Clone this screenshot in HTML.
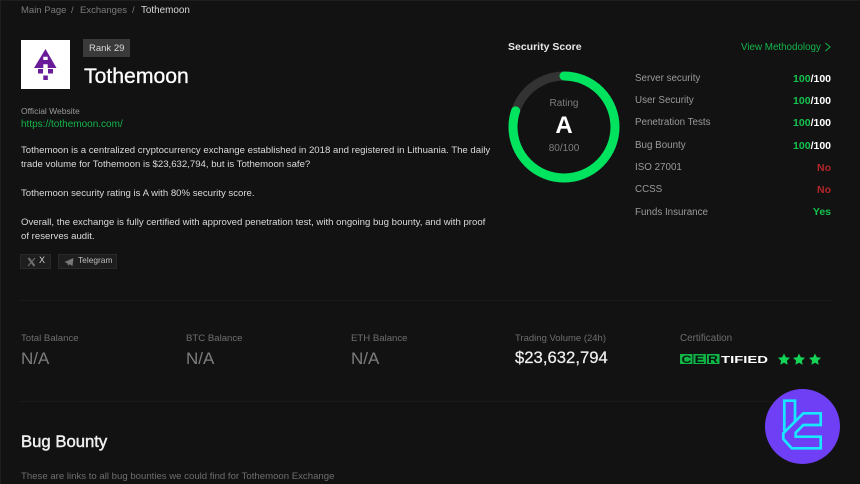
<!DOCTYPE html>
<html>
<head>
<meta charset="utf-8">
<style>
html,body{margin:0;padding:0;background:#121212;}
body{width:860px;height:484px;position:relative;overflow:hidden;font-family:"Liberation Sans",sans-serif;color:#fff;}
.t{position:absolute;white-space:nowrap;line-height:1;}
.lab{font-size:9.8px;color:#9a9a9a;left:635px}
.val{font-size:10.5px;font-weight:bold;right:29px;color:#fff}
.gr{color:#14c24f}
.hl{position:absolute;left:20px;width:812px;height:1px;background:#1a1a1a}
.sl{font-size:9.6px;color:#6e6e6e}
.sv{font-size:17px;color:#7d7d7d}
.p{font-size:9.6px;color:#dadada;left:21px}
.btn{position:absolute;top:254px;height:15px;background:#1e1e1e;border:1px solid #292929;box-sizing:border-box}
</style>
</head>
<body>
<div style="position:absolute;left:0;top:0;width:860px;height:1px;background:#1e1e1e"></div>
<div style="position:absolute;left:0;top:0;width:1px;height:484px;background:#1e1e1e"></div>

<div class="t" style="left:21px;top:6px;font-size:9.5px;color:#7b7b7b">Main Page</div>
<div class="t" style="left:71px;top:6px;font-size:9.5px;color:#7b7b7b">/</div>
<div class="t" style="left:80px;top:6px;font-size:9.5px;color:#7b7b7b">Exchanges</div>
<div class="t" style="left:132px;top:6px;font-size:9.5px;color:#7b7b7b">/</div>
<div class="t" style="left:141px;top:6px;font-size:9.9px;color:#d8d8d8">Tothemoon</div>

<div style="position:absolute;left:21px;top:40px;width:49px;height:49px;background:#fff"></div>
<svg style="position:absolute;left:21px;top:40px" width="49" height="49" viewBox="0 0 49 49">
<path fill="#6a1b9a" fill-rule="evenodd" d="M24.5 9 L35.5 28 H26.7 V24.3 H22.3 V28 H13 Z M22.3 16.7 V20 H26.7 V16.7 Z"/>
<rect x="17" y="29" width="5" height="4.5" fill="#6a1b9a"/>
<rect x="27" y="29" width="5" height="4.5" fill="#6a1b9a"/>
<rect x="22.3" y="35.5" width="4.5" height="4.5" fill="#6a1b9a"/>
</svg>

<div style="position:absolute;left:83px;top:39px;width:47px;height:18px;background:#3a3a3a"></div>
<div class="t" style="left:89px;top:44px;font-size:9.5px;color:#d8d8d8">Rank 29</div>
<div class="t" style="left:84px;top:66px;font-size:21.2px;color:#fff;-webkit-text-stroke:.3px #fff">Tothemoon</div>

<div class="t" style="left:21px;top:107px;font-size:8.5px;color:#9a9a9a">Official Website</div>
<div class="t" style="left:21px;top:120px;font-size:10px;color:#14b54a">https://tothemoon.com/</div>

<div class="t p" style="top:146px">Tothemoon is a centralized cryptocurrency exchange established in 2018 and registered in Lithuania. The daily</div>
<div class="t p" style="top:160px">trade volume for Tothemoon is $23,632,794, but is Tothemoon safe?</div>
<div class="t p" style="top:189px">Tothemoon security rating is A with 80% security score.</div>
<div class="t p" style="top:218px">Overall, the exchange is fully certified with approved penetration test, with ongoing bug bounty, and with proof</div>
<div class="t p" style="top:232px">of reserves audit.</div>

<div class="btn" style="left:20px;width:31px"></div>
<svg style="position:absolute;left:27px;top:257px" width="9" height="10" viewBox="0 0 9 10"><path d="M1.5 1 L7.5 9" stroke="#6f6f6f" stroke-width="2.2" fill="none"/><path d="M8 1 L1 9" stroke="#6f6f6f" stroke-width="1" fill="none"/></svg>
<div class="t" style="left:39px;top:256px;font-size:9px;color:#cfcfcf">X</div>
<div class="btn" style="left:58px;width:59px"></div>
<svg style="position:absolute;left:64px;top:257px" width="10" height="10" viewBox="0 0 10 10"><path d="M0.5 5 L9.5 1 L8.5 9 L5.5 7.2 L4 8.8 L3.4 6.4 Z" fill="#777"/></svg>
<div class="t" style="left:78px;top:256px;font-size:8.4px;color:#bdbdbd">Telegram</div>

<div class="t" style="left:508px;top:42px;font-size:10.5px;font-weight:bold;color:#e8e8e8">Security Score</div>
<div class="t" style="left:741px;top:43px;font-size:9.8px;color:#14b54a">View Methodology</div>
<svg style="position:absolute;left:824px;top:42px" width="8" height="10" viewBox="0 0 8 10"><path d="M1.5 1 L6 5 L1.5 9" stroke="#14b54a" stroke-width="1" fill="none"/></svg>

<svg style="position:absolute;left:504px;top:67px" width="120" height="120" viewBox="0 0 120 120">
<circle cx="60" cy="60" r="51" fill="none" stroke="#333" stroke-width="9"/>
<circle cx="60" cy="60" r="51" fill="none" stroke="#00e35f" stroke-width="9" stroke-linecap="round" stroke-dasharray="256.4 320.4" transform="rotate(-90 60 60)"/>
</svg>
<div class="t" style="left:504px;width:120px;text-align:center;top:99px;font-size:10px;color:#7d7d7d">Rating</div>
<div class="t" style="left:504px;width:120px;text-align:center;top:114px;font-size:24px;font-weight:bold;color:#fff">A</div>
<div class="t" style="left:504px;width:120px;text-align:center;top:144px;font-size:10px;color:#7d7d7d">80/100</div>

<div class="t lab" style="top:74px">Server security</div>
<div class="t lab" style="top:96px">User Security</div>
<div class="t lab" style="top:118px">Penetration Tests</div>
<div class="t lab" style="top:141px">Bug Bounty</div>
<div class="t lab" style="top:163px">ISO 27001</div>
<div class="t lab" style="top:185px">CCSS</div>
<div class="t lab" style="top:208px">Funds Insurance</div>

<div class="t val" style="top:74px"><span class="gr">100</span>/100</div>
<div class="t val" style="top:96px"><span class="gr">100</span>/100</div>
<div class="t val" style="top:118px"><span class="gr">100</span>/100</div>
<div class="t val" style="top:141px"><span class="gr">100</span>/100</div>
<div class="t val" style="top:163px;color:#b3262a">No</div>
<div class="t val" style="top:185px;color:#b3262a">No</div>
<div class="t val" style="top:207px;color:#14c24f">Yes</div>

<div class="hl" style="top:300px"></div>
<div class="hl" style="top:401px"></div>

<div class="t sl" style="left:21px;top:334px">Total Balance</div>
<div class="t sv" style="left:21px;top:350px">N/A</div>
<div class="t sl" style="left:186px;top:334px">BTC Balance</div>
<div class="t sv" style="left:186px;top:350px">N/A</div>
<div class="t sl" style="left:351px;top:334px">ETH Balance</div>
<div class="t sv" style="left:351px;top:350px">N/A</div>
<div class="t sl" style="left:515px;top:334px;font-size:9.5px">Trading Volume (24h)</div>
<div class="t" style="left:515px;top:350px;font-size:16.7px;color:#f0f0f0;-webkit-text-stroke:.2px #f0f0f0">$23,632,794</div>
<div class="t sl" style="left:680px;top:334px;font-size:9.9px">Certification</div>

<svg style="position:absolute;left:680px;top:353px" width="150" height="14" viewBox="0 0 150 14">
<rect x="0" y="1" width="39.5" height="10" fill="#10b548"/>
<rect x="12.4" y="1" width="1" height="10" fill="#121212"/>
<rect x="25.9" y="1" width="1" height="10" fill="#121212"/>
<text x="1.5" y="10" font-family="Liberation Sans" font-weight="bold" font-size="11" fill="#08170e" textLength="10" lengthAdjust="spacingAndGlyphs">C</text>
<text x="14.5" y="10" font-family="Liberation Sans" font-weight="bold" font-size="11" fill="#08170e" textLength="10" lengthAdjust="spacingAndGlyphs">E</text>
<text x="28" y="10" font-family="Liberation Sans" font-weight="bold" font-size="11" fill="#08170e" textLength="10" lengthAdjust="spacingAndGlyphs">R</text>
<text x="41" y="10" font-family="Liberation Sans" font-weight="bold" font-size="10" fill="#fff" textLength="47" lengthAdjust="spacingAndGlyphs">TIFIED</text>
<path fill="#14d356" d="M104 0.5 L105.8 4.3 L110 4.8 L106.9 7.7 L107.7 11.8 L104 9.8 L100.3 11.8 L101.1 7.7 L98 4.8 L102.2 4.3 Z"/>
<path fill="#14d356" d="M119 0.5 L120.8 4.3 L125 4.8 L121.9 7.7 L122.7 11.8 L119 9.8 L115.3 11.8 L116.1 7.7 L113 4.8 L117.2 4.3 Z"/>
<path fill="#14d356" d="M135 0.5 L136.8 4.3 L141 4.8 L137.9 7.7 L138.7 11.8 L135 9.8 L131.3 11.8 L132.1 7.7 L129 4.8 L133.2 4.3 Z"/>
</svg>

<div class="t" style="left:21px;top:434px;font-size:16.7px;color:#f0f0f0;-webkit-text-stroke:.45px #f0f0f0">Bug Bounty</div>
<div class="t" style="left:21px;top:472px;font-size:9.6px;color:#6e6e6e">These are links to all bug bounties we could find for Tothemoon Exchange</div>

<svg style="position:absolute;left:765px;top:389px" width="75" height="75" viewBox="0 0 75 75">
<circle cx="37.5" cy="37.5" r="37.5" fill="#6f3ff5"/>
<g fill="none" stroke="#19e6ff" stroke-width="2.7">
<path d="M30 32 V11.7 H19.3 V42"/>
<path d="M55.7 24.3 H38.3 L18.3 44.3 V50 L26.7 59.3 H55.7 V47.7 H30.7 V43.7 L38.3 36 H55.7 Z"/>
</g>
</svg>
</body>
</html>
